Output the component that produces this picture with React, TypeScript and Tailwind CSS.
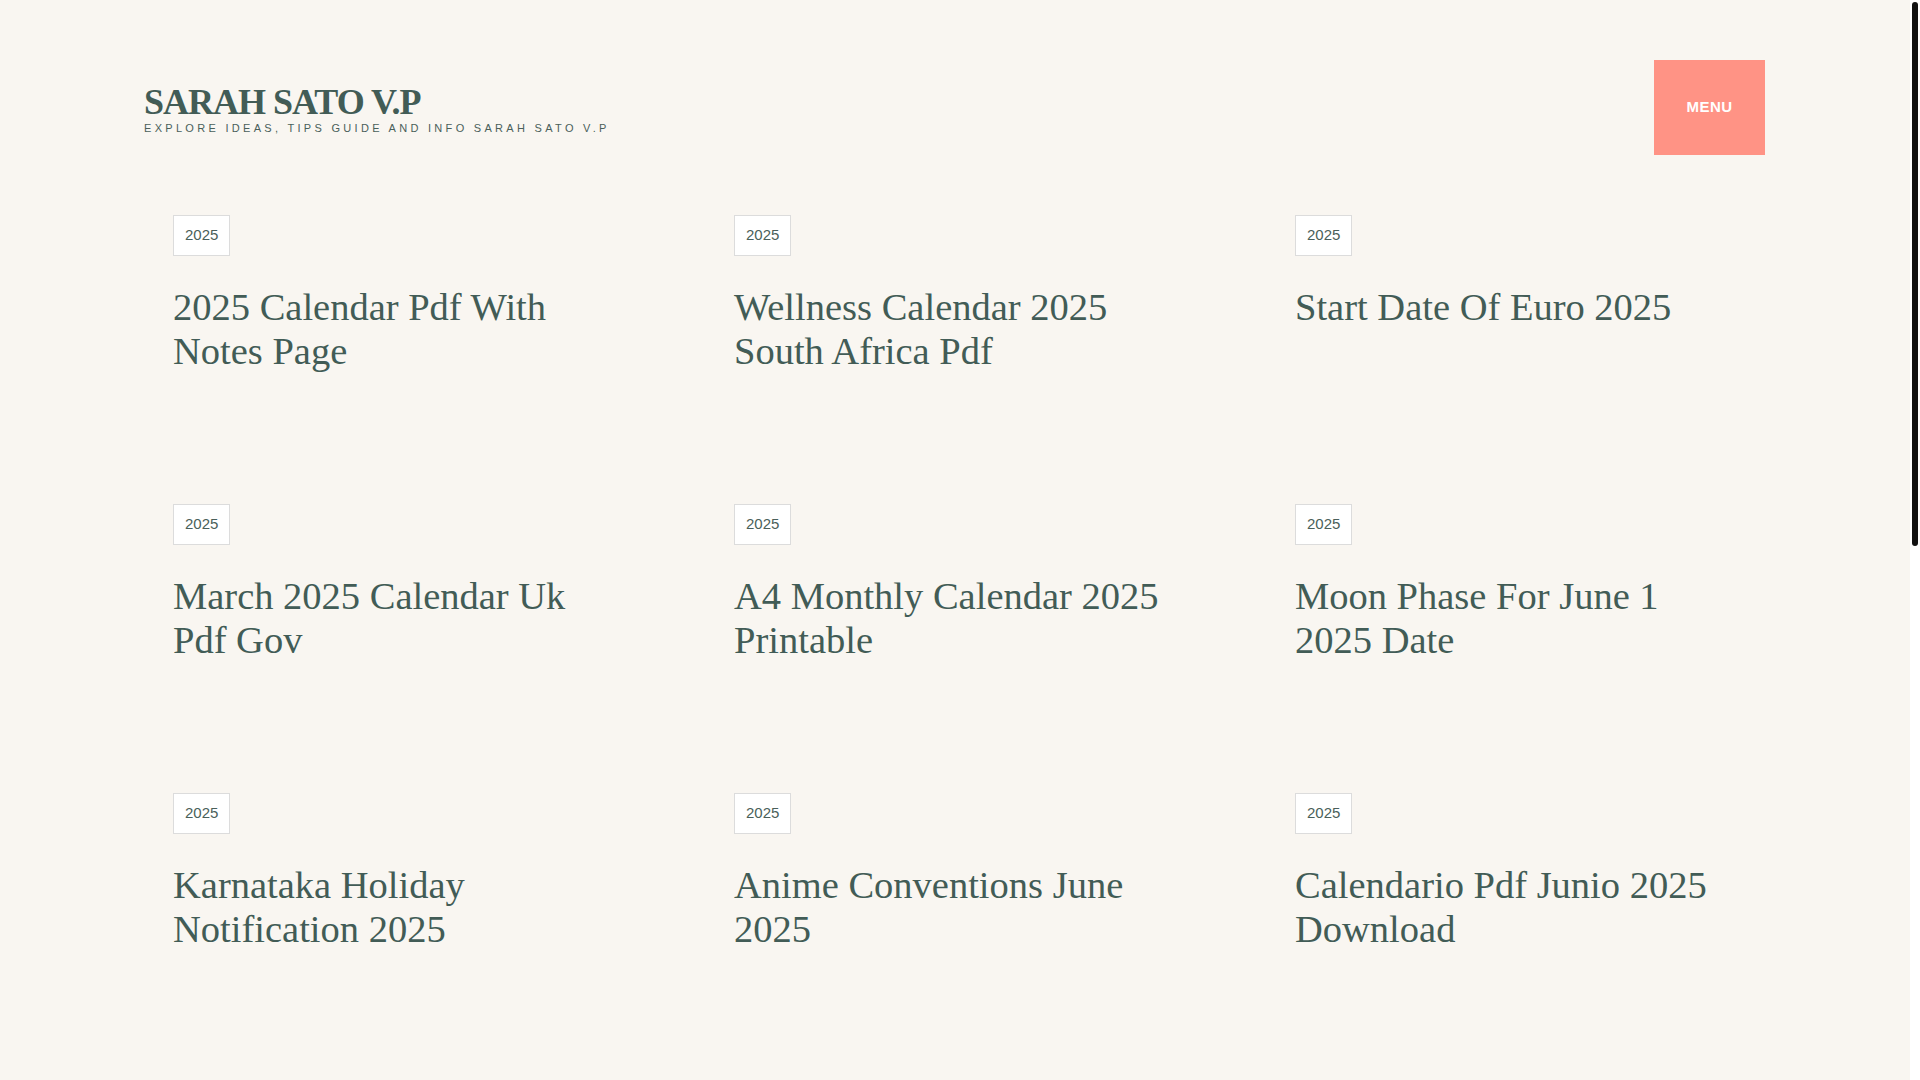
const posts = [
  'Calendar Pdf With Notes Page',
  'Wellness Calendar 2025 South Africa Pdf',
  'Start Date Of Euro 2025',
  'March 2025 Calendar Uk Pdf Gov',
  'A4 Monthly Calendar 2025 Printable',
  'Moon Phase For June 1 2025 Date',
  'Karnataka Holiday Notification 2025',
  'Anime Conventions June 2025',
  'Calendario Pdf Junio 2025 Download',
];

function PostCard({ title }: { title: string }) {
  return (
    <article className="flex flex-col items-start">
      <a
        href="#"
        className="inline-flex h-[41px] items-center border border-[#dcdcdc] bg-white px-[11px] text-[15px] text-[#4a5f5a] font-['Liberation_Sans',Arial,sans-serif]"
      >
        2025
      </a>
      <h2 className="mt-[29px] text-[38.5px] leading-[44px] font-normal text-[#425c56] font-['Liberation_Serif','Times_New_Roman',serif]">
        <a href="#">{title}</a>
      </h2>
    </article>
  );
}

export default function App() {
  const titles = posts.map((t, i) => (i === 0 ? '2025 ' + t : t));

  return (
    <div className="flex h-screen overflow-hidden bg-[#f9f6f1]">
      <div className="min-w-0 flex-1 pl-[143px] pr-[145px]">
        <header className="flex items-start justify-between pt-[60px]">
          <div className="mt-[23px] pl-[1px]">
            <h1 className="text-[36px] leading-[38px] font-bold tracking-[-1px] text-[#425c56] font-['Liberation_Serif','Times_New_Roman',serif]">
              <a href="#">SARAH SATO V.P</a>
            </h1>
            <p className="text-[11px] leading-[14px] tracking-[0.3em] text-[#4a5f5a] font-['Liberation_Sans',Arial,sans-serif]">
              EXPLORE IDEAS, TIPS GUIDE AND INFO SARAH SATO V.P
            </p>
          </div>

          <button className="flex h-[95px] w-[111px] items-center justify-center bg-[#ff9385] text-[15px] font-bold tracking-[0.03em] text-white font-['Liberation_Sans',Arial,sans-serif]">
            MENU
          </button>
        </header>

        <main className="mt-[60px] grid grid-cols-[repeat(3,440px)] gap-x-[121px] gap-y-[131px] pl-[30px]">
          {titles.map((t) => (
            <PostCard key={t} title={t} />
          ))}
        </main>
      </div>

      {/* scrollbar */}
      <div className="w-[10px] shrink-0 bg-white px-[2px] pt-[2px]">
        <div className="h-[544px] rounded-full bg-[#111]" />
      </div>
    </div>
  );
}
